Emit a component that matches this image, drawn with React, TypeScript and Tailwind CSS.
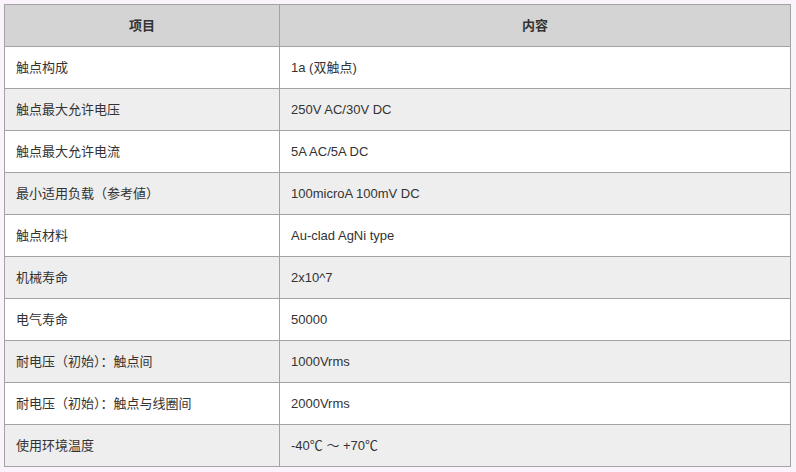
import React from "react";

const rows: [string, string][] = [
    ["触点构成", "1a (双触点)"],
    ["触点最大允许电压", "250V AC/30V DC"],
    ["触点最大允许电流", "5A AC/5A DC"],
    ["最小适用负载（参考値）", "100microA 100mV DC"],
    ["触点材料", "Au-clad AgNi type"],
    ["机械寿命", "2x10^7"],
    ["电气寿命", "50000"],
    ["耐电压（初始）：触点间", "1000Vrms"],
    ["耐电压（初始）：触点与线圈间", "2000Vrms"],
    ["使用环境温度", "-40℃ ～ +70℃"],
];

export default function App() {
    return (
        <div
            className="w-[796px] h-[472px] bg-[#faf3fb] pt-[4px] pl-[4px]"
            style={{ fontFamily: '"Liberation Sans", Arial, "Noto Sans CJK SC", sans-serif' }}
        >
            <table className="w-[787px] border-collapse table-fixed text-[13px] text-[#333333]">
                <colgroup>
                    <col className="w-[275px]" />
                    <col />
                </colgroup>
                <thead>
                    {/* ヘッダー行 */}
                    <tr className="h-[42px] bg-[#d4d4d4]">
                        <th className="border border-[#a3a3a3] font-bold text-center">项目</th>
                        <th className="border border-[#a3a3a3] font-bold text-center">内容</th>
                    </tr>
                </thead>
                <tbody>
                    {/* 偶数行は白、奇数行は薄いグレー */}
                    {rows.map(([k, v], i) => (
                        <tr key={k} className={i % 2 === 0 ? "h-[42px] bg-white" : "h-[42px] bg-[#eeeeee]"}>
                            <td className="border border-[#a3a3a3] pl-[11px]">{k}</td>
                            <td className="border border-[#a3a3a3] pl-[11px]">{v}</td>
                        </tr>
                    ))}
                </tbody>
            </table>
        </div>
    );
}
